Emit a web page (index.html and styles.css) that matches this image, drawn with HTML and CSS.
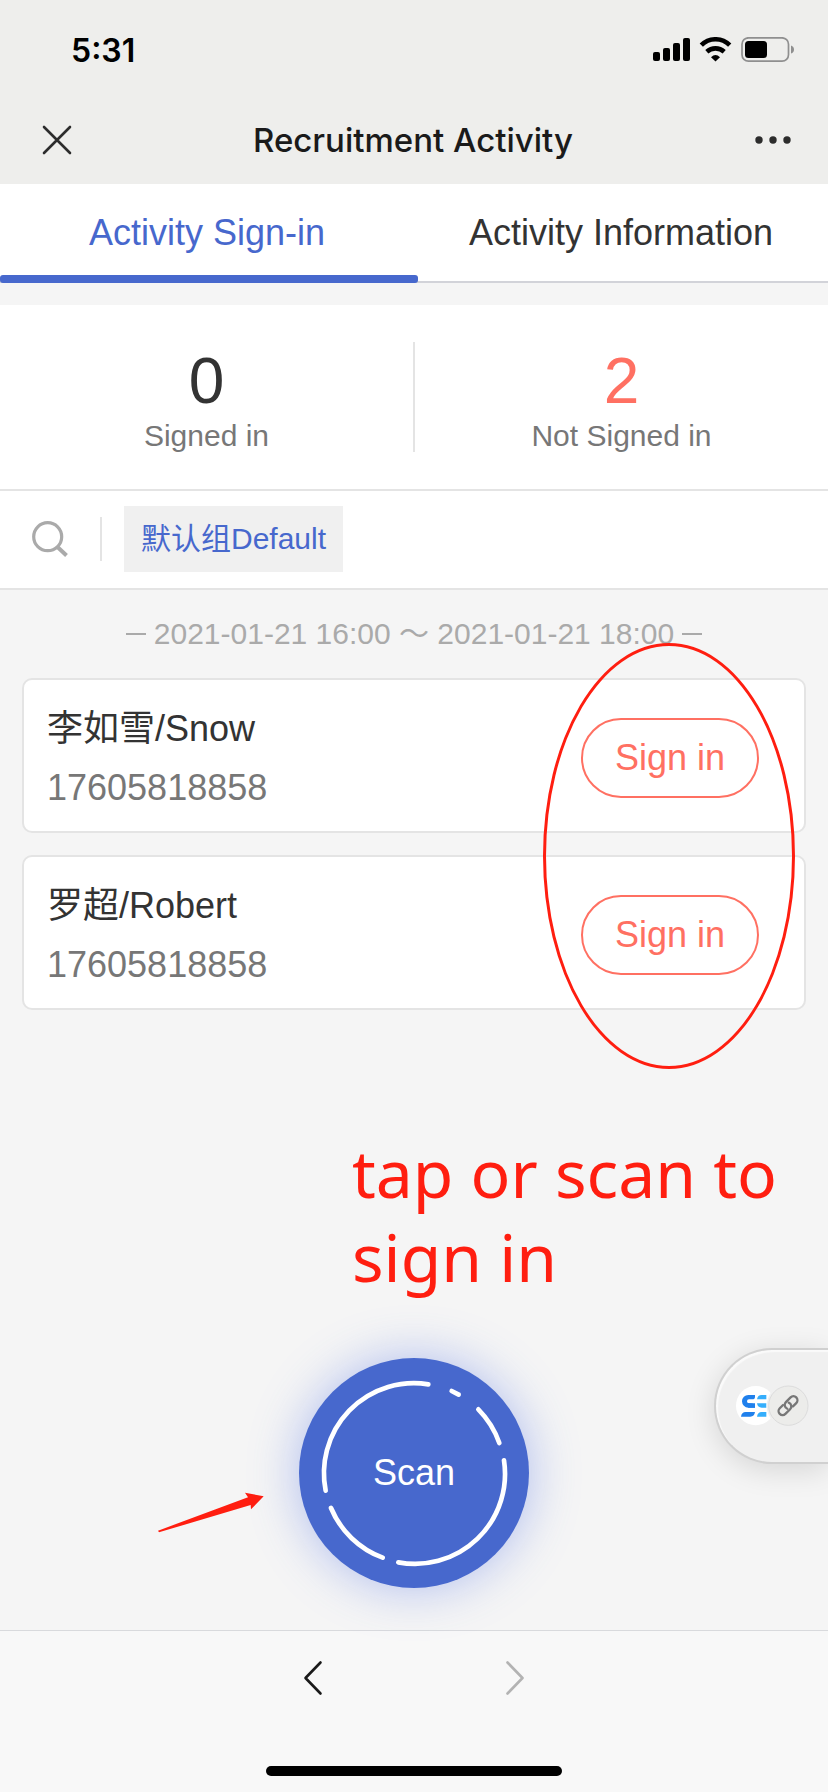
FILE: index.html
```html
<!DOCTYPE html>
<html lang="en">
<head>
<meta charset="utf-8">
<meta name="viewport" content="width=device-width, initial-scale=1">
<title>Recruitment Activity</title>
<link rel="stylesheet" href="styles.css">
</head>
<body>
<header class="top">
  <div class="status">
    <span class="time">5:31</span>
    <svg class="status-icons" width="142" height="26" viewBox="653 37 142 26" aria-hidden="true">
      <rect x="653" y="52" width="7" height="9" rx="2"/>
      <rect x="663" y="48" width="7" height="13" rx="2"/>
      <rect x="673" y="43" width="7" height="18" rx="2"/>
      <rect x="683" y="38" width="7" height="23" rx="2"/>
      <g fill="none" stroke="#000" stroke-width="4.6">
        <path d="M701.3 45.200a20 20 0 0 1 28.400 0"/>
        <path d="M706.800 51.700a13 13 0 0 1 17.400 0"/>
      </g>
      <path d="M711 57.200q4.500-4.200 9 0l-4.500 4.300z"/>
      <rect x="742" y="37.800" width="46.500" height="23.400" rx="6.500" fill="none" stroke="#8f8f8f" stroke-width="1.700"/>
      <rect x="745" y="41" width="22" height="17" rx="3.500"/>
      <path d="M791 45.500q3 1 3 4t-3 4z" fill="#8f8f8f"/>
    </svg>
  </div>
  <div class="nav">
    <button class="icon-btn" type="button" aria-label="Close">
      <svg width="30" height="30" viewBox="0 0 30 30"><path d="M2 2l26 26M28 2L2 28" stroke="#2c2c2c" stroke-width="2.600" stroke-linecap="round"/></svg>
    </button>
    <h1 class="title">Recruitment Activity</h1>
    <button class="icon-btn" type="button" aria-label="More">
      <svg width="38" height="10" viewBox="0 0 38 10" fill="#2c2c2c"><circle cx="5" cy="5" r="3.700"/><circle cx="19" cy="5" r="3.700"/><circle cx="33" cy="5" r="3.700"/></svg>
    </button>
  </div>
</header>

<nav class="tabs">
  <a class="tab tab-active" href="#sign-in" aria-current="page">Activity Sign-in</a>
  <a class="tab" href="#information">Activity Information</a>
</nav>

<section class="stats">
  <div class="stat"><span class="stat-num">0</span><span class="stat-label">Signed in</span></div>
  <div class="stat"><span class="stat-num stat-alert">2</span><span class="stat-label">Not Signed in</span></div>
</section>

<section class="filter">
  <button class="search" type="button" aria-label="Search">
    <svg width="36" height="36" viewBox="0 0 36 36" fill="none" stroke="#aaa" stroke-width="3.200"><circle cx="15.700" cy="15.700" r="14"/><path d="M25.500 26l9 8.500" stroke-width="4"/></svg>
  </button>
  <button class="group" type="button">默认组Default</button>
</section>

<main class="main" id="sign-in">
  <p class="period"><span class="dash"></span><span>2021-01-21 16:00 ～ 2021-01-21 18:00</span><span class="dash"></span></p>

  <div class="list-wrap">
    <ul class="list">
      <li class="card">
        <div class="person"><span class="name">李如雪/Snow</span><span class="phone">17605818858</span></div>
        <button class="sign" type="button">Sign in</button>
      </li>
      <li class="card">
        <div class="person"><span class="name">罗超/Robert</span><span class="phone">17605818858</span></div>
        <button class="sign" type="button">Sign in</button>
      </li>
    </ul>
    <div class="ring"></div>
  </div>

  <p class="note">tap or scan to sign in</p>

  <div class="scan-row">
    <svg class="arrow" width="108" height="42" viewBox="56 66 324 126" aria-hidden="true"><path d="M56 182L326 82L317 68L373 79L335 118L334 105L59 187z" fill="#ff1e10"/></svg>
    <button class="scan" type="button">
      <svg class="scan-ring" viewBox="87 114 690 690" fill="none" stroke="#fff" stroke-width="14" stroke-linecap="round" aria-hidden="true">
        <path d="M167 512A270 270 0 0 1 475 193"/>
        <path d="M545 213L566 224"/>
        <path d="M625 268A270 270 0 0 1 688 369"/>
        <path d="M702 421A270 270 0 0 1 385 727"/>
        <path d="M338 713A270 270 0 0 1 183 564"/>
      </svg>
      <span>Scan</span>
    </button>
    <button class="float" type="button" aria-label="Floating pages">
      <svg width="74" height="42" viewBox="168 196 222 126" aria-hidden="true">
        <circle cx="227" cy="258" r="59" fill="#fff"/>
        <path d="M225 226h-20a19 19 0 0 0 0 38h20v-13h-18a6 6 0 0 1 0-12h10q8 0 8-8zM183 291q2-14 14-14h28q-2 14-14 14z" fill="#2080ec"/>
        <path d="M199 251h12q14 0 14 13h-20z" fill="#2080ec"/>
        <path d="M231 239q2-13 14-13h14v13zM231 251h28v13h-14q-12 0-14-13zM231 291q2-14 14-14h14v14z" fill="#35aefc"/>
        <circle cx="325" cy="258" r="65" fill="#f0f0f0"/>
        <circle cx="325" cy="258" r="59" fill="#ececea" stroke="#dcdcdc" stroke-width="3"/>
        <g fill="none" stroke="#777" stroke-width="7" stroke-linecap="round" transform="rotate(-45 324 258)">
          <path d="M315 246h-14a12 12 0 0 0 0 24h20a12 12 0 0 0 11-17"/>
          <path d="M333 270h14a12 12 0 0 0 0-24h-20a12 12 0 0 0-11 17"/>
        </g>
      </svg>
    </button>
  </div>
</main>

<footer class="bottom">
  <div class="pager">
    <button class="icon-btn" type="button" aria-label="Back"><svg width="20" height="36" viewBox="0 0 20 36" fill="none" stroke="#1a1a1a" stroke-width="2.600" stroke-linecap="round" stroke-linejoin="round"><path d="M17.500 2.500L2.500 18L17.500 33.500"/></svg></button>
    <button class="icon-btn" type="button" aria-label="Forward" disabled><svg width="20" height="36" viewBox="0 0 20 36" fill="none" stroke="#b3b3b3" stroke-width="2.600" stroke-linecap="round" stroke-linejoin="round"><path d="M2.500 2.500L17.500 18L2.500 33.500"/></svg></button>
  </div>
  <div class="home"></div>
</footer>
</body>
</html>
```
FILE: styles.css
```css
* { box-sizing: border-box; }

body {
  margin: 0;
  min-height: 100vh;
  display: flex;
  flex-direction: column;
  background: #f5f5f5;
  color: #333;
  font-family: "Liberation Sans", "Noto Sans CJK SC", sans-serif;
  font-size: 36px;
  overflow-x: hidden;
}

button {
  margin: 0;
  padding: 0;
  border: 0;
  background: none;
  color: inherit;
  font: inherit;
}

svg { display: block; }

.top { background: #eeeeec; font-family: Inter, sans-serif; }

.status {
  display: flex;
  justify-content: space-between;
  align-items: center;
  height: 100px;
  padding: 0 33px 0 71px;
}

.time { color: #000; font-size: 32px; font-weight: 600; }

.nav {
  display: flex;
  justify-content: space-between;
  align-items: center;
  height: 84px;
  padding: 0 36px 4px 42px;
}

.title { margin: 0; color: #1a1a1a; font-size: 33px; font-weight: 500; }

.tabs {
  display: flex;
  height: 99px;
  margin-bottom: 22px;
  background: #fff;
  box-shadow: inset 0 -2px #d2d3d9;
}

.tab {
  position: relative;
  flex: 1;
  padding-top: 20px;
  color: #333;
  line-height: 58px;
  text-align: center;
  text-decoration: none;
}

.tab-active { color: #4768cd; }

.tab-active::after {
  content: "";
  position: absolute;
  left: 0;
  right: -4px;
  bottom: 0;
  height: 8px;
  border-radius: 3px;
  background: #4768cd;
}

.stats {
  display: flex;
  padding: 37px 0;
  border-bottom: 2px solid #e4e4e4;
  background: #fff;
}

.stat {
  display: flex;
  flex: 1;
  flex-direction: column;
  align-items: center;
  height: 110px;
}

.stat:first-child { border-right: 2px solid #e4e4e4; }
.stat-num { font-size: 64px; line-height: 78px; }
.stat-alert { color: #ff7062; }
.stat-label { color: #777; font-size: 30px; line-height: 32px; }

.filter {
  display: flex;
  align-items: center;
  height: 99px;
  padding-bottom: 2px;
  border-bottom: 2px solid #e4e4e4;
  background: #fff;
}

.search {
  display: flex;
  align-items: center;
  height: 44px;
  padding: 0 32px;
  border-right: 2px solid #e4e4e4;
}

.group {
  height: 66px;
  margin-left: 22px;
  padding: 0 17px;
  background: #f0f0f0;
  color: #4768cd;
  font-size: 30px;
  line-height: 36px;
}

.main { display: flex; flex: 1; flex-direction: column; }

.period {
  display: flex;
  justify-content: center;
  align-items: center;
  gap: 8px;
  height: 88px;
  margin: 0;
  color: #aaa;
  font-size: 30px;
  line-height: 36px;
}

.dash { width: 20px; height: 2px; background: #aaa; }

.list-wrap { position: relative; padding: 0 22px; }

.list {
  display: flex;
  flex-direction: column;
  gap: 22px;
  margin: 0;
  padding: 0;
  list-style: none;
}

.card {
  display: flex;
  justify-content: space-between;
  align-items: center;
  padding: 19px 45px 14px 23px;
  border: 2px solid #e4e4e4;
  border-radius: 10px;
  background: #fff;
}

.person { display: flex; flex-direction: column; line-height: 59px; }
.phone { color: #777; }

.sign {
  height: 80px;
  padding: 0 32px;
  border: 2px solid #ff7062;
  border-radius: 40px;
  color: #ff7062;
}

.ring {
  position: absolute;
  top: -35px;
  right: 33px;
  width: 252px;
  height: 426px;
  border: 3px solid #ff1e10;
  border-radius: 50%;
  pointer-events: none;
}

.note {
  margin: 120px 32px 60px 352px;
  color: #ff1e10;
  font-family: "Noto Sans", sans-serif;
  font-size: 66px;
  line-height: 84px;
}

.scan-row {
  position: relative;
  display: flex;
  justify-content: center;
  padding-bottom: 42px;
}

.arrow { position: absolute; top: 134px; right: calc(50% + 148px); }

.scan {
  position: relative;
  width: 230px;
  height: 230px;
  border-radius: 50%;
  background: #4768cd;
  box-shadow: 0 0 50px rgba(71, 104, 230, 0.4);
  color: #fff;
}

.scan-ring { position: absolute; inset: 0; }

.float {
  position: absolute;
  top: -10px;
  right: 0;
  display: flex;
  align-items: center;
  width: 114px;
  height: 116px;
  padding-left: 20px;
  border: 2px solid #d0d0d0;
  border-right: 0;
  border-radius: 58px 0 0 58px;
  background: #f0f0f0;
  box-shadow: inset 2px 2px 1px #fafafa, 0 6px 30px rgba(0, 0, 0, 0.13);
}

.bottom {
  display: flex;
  flex-direction: column;
  justify-content: space-between;
  align-items: center;
  height: 162px;
  padding: 29px 0 16px;
  border-top: 1px solid #d9dadd;
  background: #f8f8f8;
}

.pager { display: flex; gap: 182px; }
.home { width: 296px; height: 10px; border-radius: 5px; background: #000; }
```
